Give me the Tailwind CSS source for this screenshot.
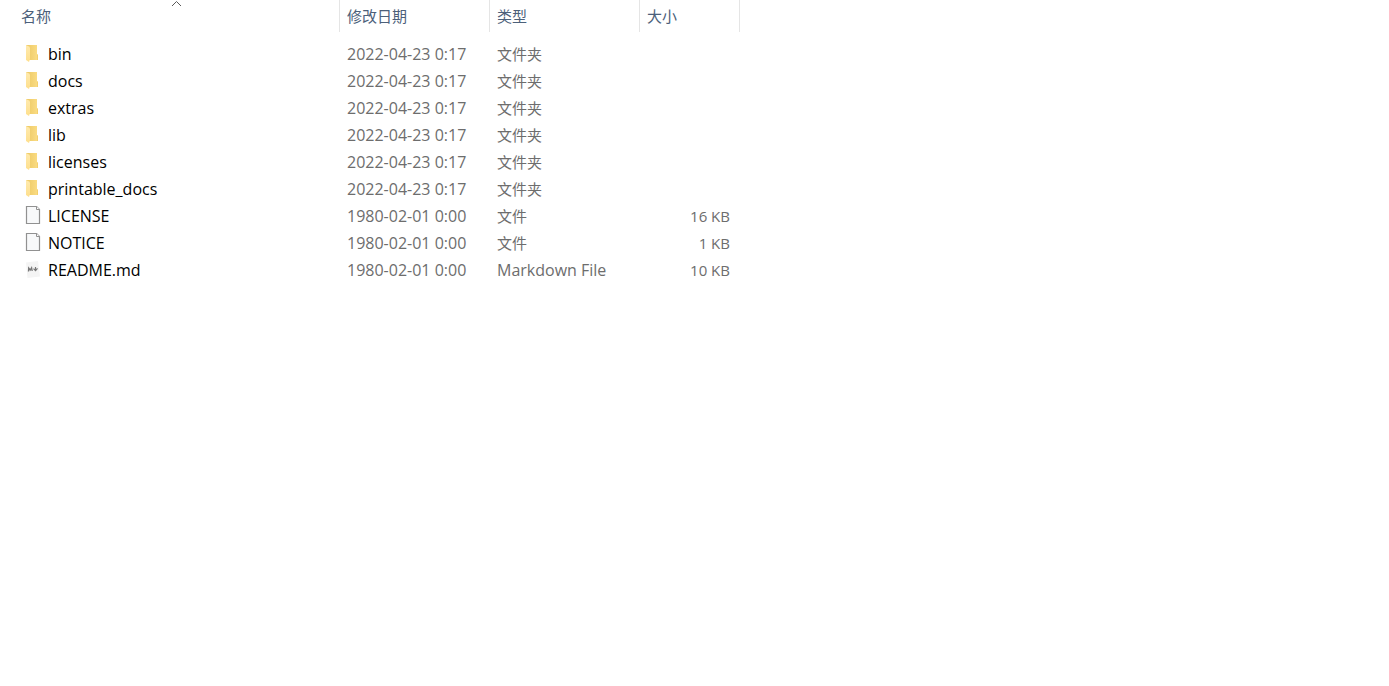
<!DOCTYPE html>
<html lang="zh-CN">
<head>
  <meta charset="UTF-8">
  <meta name="viewport" content="width=device-width, initial-scale=1.0">
  <title>文件列表</title>
  <script src="https://cdn.jsdelivr.net/npm/@tailwindcss/browser@4"></script>
</head>
<body class="bg-white font-['Open_Sans','Noto_Sans_CJK_SC',sans-serif] text-[#6d6d6d]">

  <!-- 图标 -->
  <svg class="absolute w-0 h-0" aria-hidden="true">
    <defs>
      <linearGradient id="folder-back" x1="0" y1="0" x2="1" y2="0">
        <stop offset="0" stop-color="#ecc863"/>
        <stop offset="1" stop-color="#fbdd85"/>
      </linearGradient>
      <linearGradient id="folder-front" x1="0" y1="0" x2="0" y2="1">
        <stop offset="0" stop-color="#ffeaae"/>
        <stop offset="1" stop-color="#fedf8c"/>
      </linearGradient>
    </defs>
    <symbol id="icon-folder" viewBox="0 0 16 21">
      <path d="M1 1h11v9l1 1v5H1z" fill="url(#folder-back)"/>
      <path d="M12 10l1 1v5h-1z" fill="#f3cf6e"/>
      <path d="M1 1l3 1.500 1 1V15l-1 3-3-2z" fill="url(#folder-front)"/>
    </symbol>
    <symbol id="icon-file" viewBox="0 0 16 21">
      <path d="M1.500 .5h10l3 3v14h-13z" fill="#f8f9fa" stroke="#919191" stroke-width="1.200"/>
      <path d="M11.500 .5v3h3" fill="#fff" stroke="#919191"/>
    </symbol>
    <symbol id="icon-md" viewBox="0 0 16 21">
      <path d="M1 2.500l12-1.500 2 15.500-12.500 1.500z" fill="#f4f4f4"/>
      <path d="M3.500 11.500l.2-3.500 1.500 2 1.400-2.300.6 3.300" fill="none" stroke="#777" stroke-width="1.300"/>
      <path d="M10.500 7v4M8.500 8.700l2 2 2-2.400" fill="none" stroke="#777" stroke-width="1.200"/>
    </symbol>
  </svg>

  <table class="table-fixed w-[740px] border-collapse text-left whitespace-nowrap">
    <colgroup>
      <col class="w-[340px]">
      <col class="w-[150px]">
      <col class="w-[150px]">
      <col class="w-[100px]">
    </colgroup>
    <thead>
      <tr class="text-[15px] leading-8 text-[#4c607a]">
        <th scope="col" class="relative p-0 font-normal shadow-[inset_-1px_0_#e5e5e5]">
          <button class="block w-full h-8 pl-[21px] text-left">名称</button>
          <svg class="absolute top-0 left-[171px] w-[11px] h-[7px]" viewBox="0 0 11 7" fill="none" stroke="#5a5a5a"><path d="M1 6l4.500-4.500L10 6"/></svg>
        </th>
        <th scope="col" class="p-0 font-normal shadow-[inset_-1px_0_#e5e5e5]"><button class="block w-full h-8 pl-[7px] text-left">修改日期</button></th>
        <th scope="col" class="p-0 font-normal shadow-[inset_-1px_0_#e5e5e5]"><button class="block w-full h-8 pl-[7px] text-left">类型</button></th>
        <th scope="col" class="p-0 font-normal shadow-[inset_-1px_0_#e5e5e5]"><button class="block w-full h-8 pl-[7px] text-left">大小</button></th>
      </tr>
      <tr aria-hidden="true"><td colspan="4" class="p-0 h-[9px]"></td></tr>
    </thead>
    <tbody id="files"></tbody>
  </table>

  <script>
    const files = [
      { icon: 'folder', name: 'bin', date: '2022-04-23 0:17', type: '文件夹', size: '' },
      { icon: 'folder', name: 'docs', date: '2022-04-23 0:17', type: '文件夹', size: '' },
      { icon: 'folder', name: 'extras', date: '2022-04-23 0:17', type: '文件夹', size: '' },
      { icon: 'folder', name: 'lib', date: '2022-04-23 0:17', type: '文件夹', size: '' },
      { icon: 'folder', name: 'licenses', date: '2022-04-23 0:17', type: '文件夹', size: '' },
      { icon: 'folder', name: 'printable_docs', date: '2022-04-23 0:17', type: '文件夹', size: '' },
      { icon: 'file', name: 'LICENSE', date: '1980-02-01 0:00', type: '文件', size: '16 KB' },
      { icon: 'file', name: 'NOTICE', date: '1980-02-01 0:00', type: '文件', size: '1 KB' },
      { icon: 'md', name: 'README.md', date: '1980-02-01 0:00', type: 'Markdown File', size: '10 KB' },
    ];

    // 中文用 15px，西文用 16px
    const typeSize = type => /^[A-Z]/i.test(type) ? 'text-base' : 'text-[15px]';

    document.getElementById('files').innerHTML = files.map(f => `
      <tr class="text-base leading-[27px] hover:bg-[#e5f3ff]">
        <td class="p-0 pl-[25px]">
          <div class="flex items-center gap-[7px] h-[27px] text-black">
            <svg class="w-4 h-[21px]" aria-hidden="true"><use href="#icon-${f.icon}"/></svg>
            <span>${f.name}</span>
          </div>
        </td>
        <td class="p-0 pl-[7px]">${f.date}</td>
        <td class="p-0 pl-[7px] ${typeSize(f.type)} leading-[27px]">${f.type}</td>
        <td class="p-0 pr-[10px] text-[15px] leading-[27px] text-right">${f.size}</td>
      </tr>
    `).join('');
  </script>
</body>
</html>
